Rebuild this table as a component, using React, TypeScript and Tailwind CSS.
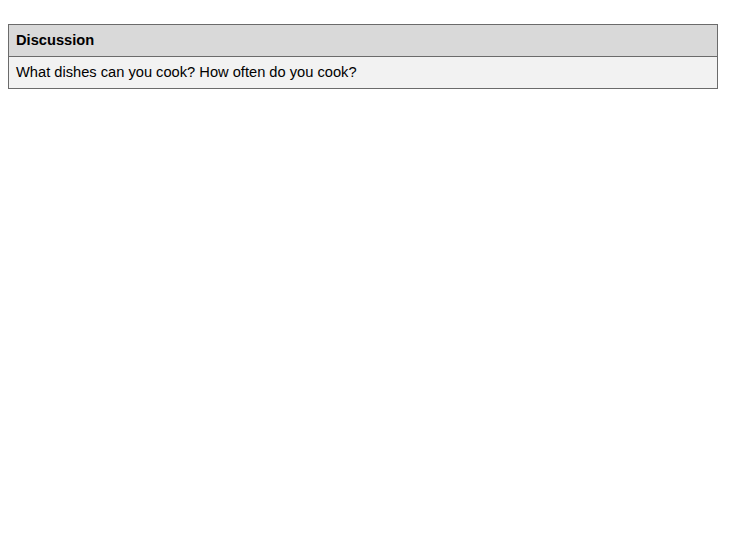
export default function App() {
  return (
    <div className="bg-white min-h-[537px] pt-6 pl-2" style={{ fontFamily: '"Liberation Sans", Arial, sans-serif' }}>
      <table className="w-[710px] border-collapse border border-[#6b6b6b] text-[14.667px] text-black">
        <thead>
          <tr>
            <th className="border border-[#6b6b6b] bg-[#d9d9d9] px-[7px] py-[7px] text-left font-bold leading-[17px]">Discussion</th>
          </tr>
        </thead>
        <tbody>
          <tr>
            <td className="border border-[#6b6b6b] bg-[#f2f2f2] px-[7px] py-[7px] leading-[17px]">
              What dishes can you cook? How often do you cook?
            </td>
          </tr>
        </tbody>
      </table>
    </div>
  );
}
